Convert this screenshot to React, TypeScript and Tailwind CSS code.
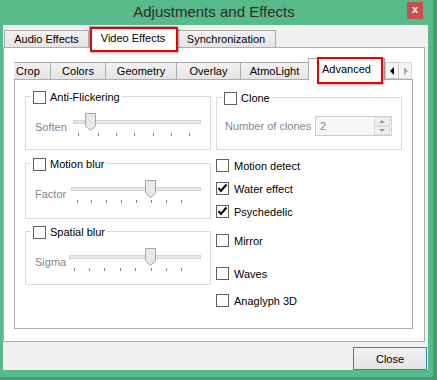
import React from "react";

const FONT = "font-['Liberation_Sans','Segoe_UI',sans-serif]";

function CheckBox({ checked = false }: { checked?: boolean }) {
  return (
    <span className="flex h-[13px] w-[13px] shrink-0 items-center justify-center border border-[#5f5f5f] bg-white">
      {checked && (
        <svg width="11" height="11" viewBox="0 0 11 11">
          <path d="M1.5 5 L4 8 L9.5 1.5" fill="none" stroke="#000" strokeWidth="2" />
        </svg>
      )}
    </span>
  );
}

type SliderProps = { trackStart: number; handle: number; ticks: number[] };

// drawn in window coordinates, svg starts at x = 60
function Slider({ trackStart, handle, ticks }: SliderProps) {
  const o = 60;
  const h = handle - o;
  return (
    <svg width="145" height="26" className="shrink-0">
      <rect x={trackStart - o + 0.5} y={8.5} width={200 - trackStart} height={3} fill="#e7e7e7" stroke="#d4d4d4" />
      {ticks.map((t) => (
        <rect key={t} x={t - o} y={21} width={1} height={3} fill="#8a8a8a" />
      ))}
      <path d={`M${h - 5} 1.5 H${h + 5} V14 L${h} 18.5 L${h - 5} 14 Z`} fill="#e8e8e8" stroke="#a3a3a3" />
    </svg>
  );
}

function Group({
  label,
  height,
  className = "",
  children,
}: {
  label: string;
  height: string;
  className?: string;
  children: React.ReactNode;
}) {
  return (
    <div className={`${height} ${className} w-[186px] border border-[#dadada]`}>
      <div className="-mt-[8px] ml-[5px] flex h-[16px] w-fit items-center gap-[4px] bg-white px-[2px]">
        <CheckBox />
        <span className="leading-[16px]">{label}</span>
      </div>
      {children}
    </div>
  );
}

function SliderRow({ label, slider }: { label: string; slider: SliderProps }) {
  return (
    <div className="mt-[7px] flex pl-[9px]">
      <div className="mt-[7px] w-[25px] whitespace-nowrap leading-[16px] text-[#858585]">{label}</div>
      <Slider {...slider} />
    </div>
  );
}

function Option({ label, checked = false, className = "" }: { label: string; checked?: boolean; className?: string }) {
  return (
    <div className={`flex h-[13px] items-center gap-[5px] ${className}`}>
      <CheckBox checked={checked} />
      <span className="whitespace-nowrap leading-[16px]">{label}</span>
    </div>
  );
}

const tabBg = "bg-gradient-to-b from-[#f2f2f2] to-[#e4e4e4]";

export default function App() {
  return (
    <div className={`${FONT} h-[380px] w-[437px] overflow-hidden bg-[#3f9e6f] text-[11px] text-black`}>
      <div className="flex h-[377px] w-[433px] flex-col bg-[#58b98a]">
        {/* title bar */}
        <div className="flex h-[25px] items-start">
          <div className="w-[21px]" />
          <div className="flex-1 pt-[2px] text-center text-[15px] leading-[20px] text-[#2d2d2d]">
            Adjustments and Effects
          </div>
          <div className="mr-[10px] mt-[2px] flex h-[17px] w-[16px] items-center justify-center bg-[#c75050] pb-[2px] text-[11px] font-bold text-white">
            x
          </div>
        </div>

        {/* client area */}
        <div className="ml-[3px] flex h-[345px] w-[425px] flex-col bg-[#f0f0f0]">
          <div className="mt-[1px] flex h-[21px] items-start">
            <div className={`ml-[1px] mt-[4px] h-[17px] w-[85px] border border-b-0 border-[#acacac] ${tabBg} pt-[1px] text-center leading-[15px]`}>
              Audio Effects
            </div>
            <div className="relative z-10 h-[22px] w-[88px] border border-b-0 border-[#acacac] bg-white pt-[3px] text-center leading-[16px]">
              Video Effects
              <div className="absolute left-0 top-0 h-[25px] w-[88px] border-2 border-[#e8000b] shadow-[1px_1px_2px_rgba(0,0,0,0.35)]" />
            </div>
            <div className={`mt-[4px] h-[17px] w-[99px] border border-b-0 border-l-0 border-[#acacac] ${tabBg} pt-[1px] text-center leading-[15px]`}>
              Synchronization
            </div>
          </div>

          <div className="h-[295px] w-[422px] border border-[#adadad] bg-white pl-[10px] pt-[10px]">
            {/* inner tabs */}
            <div className="flex h-[21px] w-[399px] items-start">
              <div className={`mt-[4px] h-[17px] w-[37px] border-r border-t border-[#acacac] ${tabBg} pl-[2px] leading-[16px]`}>
                Crop
              </div>
              <div className={`mt-[4px] h-[17px] w-[55px] border-r border-t border-[#acacac] ${tabBg} text-center leading-[16px]`}>
                Colors
              </div>
              <div className={`mt-[4px] h-[17px] w-[71px] border-r border-t border-[#acacac] ${tabBg} text-center leading-[16px]`}>
                Geometry
              </div>
              <div className={`mt-[4px] h-[17px] w-[64px] border-r border-t border-[#acacac] ${tabBg} text-center leading-[16px]`}>
                Overlay
              </div>
              <div className={`mt-[4px] h-[17px] w-[68px] border-r border-t border-[#acacac] ${tabBg} text-center leading-[16px]`}>
                AtmoLight
              </div>
              <div className="relative z-10 -ml-[1px] h-[22px] w-[77px] border border-b-0 border-[#acacac] bg-white pt-[2px] text-center leading-[16px]">
                Advanced
                <div className="absolute left-[8px] -top-[2px] h-[27px] w-[66px] border-2 border-[#e8000b] shadow-[1px_1px_2px_rgba(0,0,0,0.35)]" />
              </div>
              <div className="mt-[4px] flex h-[17px] w-[14px] items-center justify-center border border-[#c9c9c9] bg-[#f4f4f4]">
                <svg width="5" height="8" viewBox="0 0 5 8">
                  <path d="M4 0 V8 L0 4 Z" fill="#000" />
                </svg>
              </div>
              <div className="mt-[4px] flex h-[17px] w-[13px] items-center justify-center border border-l-0 border-[#dcdcdc] bg-[#f4f4f4]">
                <svg width="5" height="8" viewBox="0 0 5 8">
                  <path d="M1 0 V8 L5 4 Z" fill="#a8a8a8" />
                </svg>
              </div>
            </div>

            {/* inner pane */}
            <div className="flex h-[250px] w-[399px] gap-[5px] border border-[#adadad] pl-[10px]">
              <div className="flex flex-col">
                <Group label="Anti-Flickering" height="h-[54px]" className="mt-[16px]">
                  <SliderRow
                    label="Soften"
                    slider={{ trackStart: 73, handle: 90.5, ticks: [78, 98, 116, 134, 153, 171, 189] }}
                  />
                </Group>
                <Group label="Motion blur" height="h-[56px]" className="mt-[13px]">
                  <SliderRow
                    label="Factor"
                    slider={{ trackStart: 71, handle: 150.5, ticks: [77, 91, 106, 121, 136, 151, 166, 181] }}
                  />
                </Group>
                <Group label="Spatial blur" height="h-[54px]" className="mt-[12px]">
                  <SliderRow
                    label="Sigma"
                    slider={{ trackStart: 69, handle: 150.5, ticks: [74, 89, 104, 120, 135, 151, 166, 181] }}
                  />
                </Group>
              </div>

              <div className="flex flex-col">
                <Group label="Clone" height="h-[53px]" className="mt-[17px]">
                  <div className="mt-[10px] flex items-center pl-[8px]">
                    <div className="w-[90px] whitespace-nowrap leading-[16px] text-[#858585]">Number of clones</div>
                    <div className="flex h-[20px] w-[77px] items-center border border-[#cfcfcf] bg-[#f7f7f7]">
                      <span className="flex-1 pl-[4px] leading-[16px] text-[#8a8a8a]">2</span>
                      <svg width="16" height="18" viewBox="0 0 16 18" className="mr-[1px]">
                        <rect x="0.5" y="0.5" width="15" height="8" fill="#f0f0f0" stroke="#dcdcdc" />
                        <rect x="0.5" y="9.5" width="15" height="8" fill="#f0f0f0" stroke="#dcdcdc" />
                        <path d="M5 6 L8 3 L11 6 Z" fill="#9a9a9a" />
                        <path d="M5 12 L8 15 L11 12 Z" fill="#9a9a9a" />
                      </svg>
                    </div>
                  </div>
                </Group>
                <Option label="Motion detect" className="mt-[9px]" />
                <Option label="Water effect" checked className="mt-[10px]" />
                <Option label="Psychedelic" checked className="mt-[10px]" />
                <Option label="Mirror" className="mt-[16px]" />
                <Option label="Waves" className="mt-[20px]" />
                <Option label="Anaglyph 3D" className="mt-[14px]" />
              </div>
            </div>
          </div>

          <div className="mr-[1px] mt-[5px] flex h-[23px] w-[74px] items-center justify-center self-end border border-[#3c7fb1] bg-gradient-to-b from-[#f2f2f2] to-[#e3e3e3] leading-[16px]">
            Close
          </div>
        </div>
      </div>
    </div>
  );
}
